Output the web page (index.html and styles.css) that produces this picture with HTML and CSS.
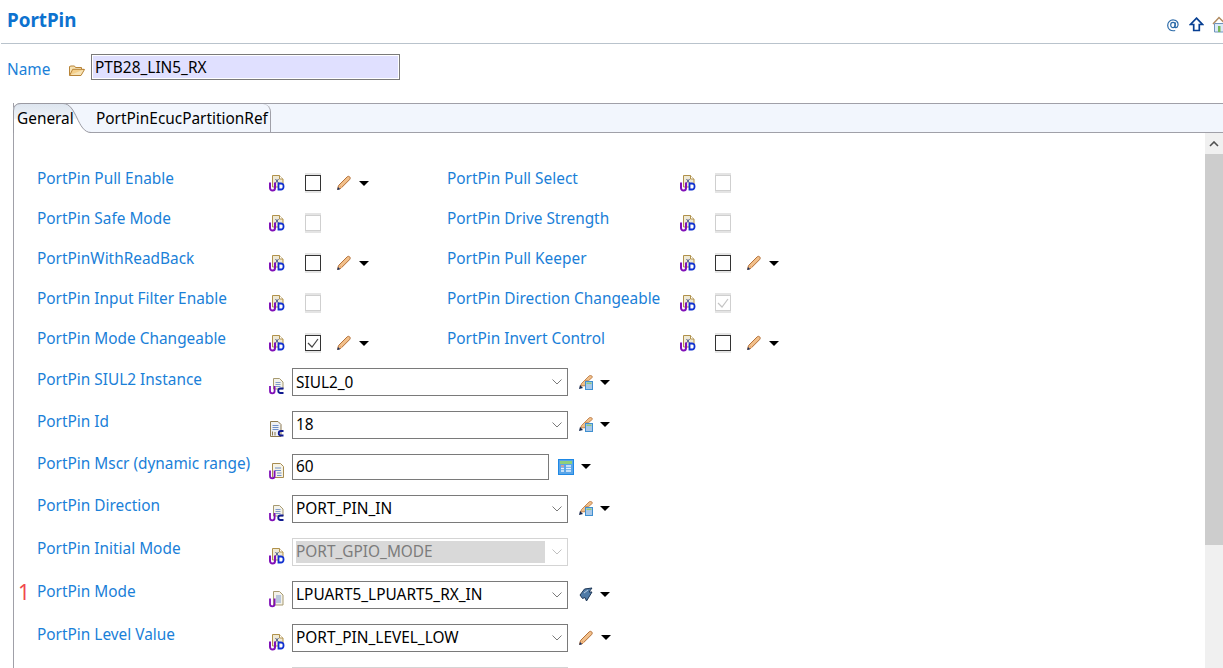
FILE: index.html
```html
<!DOCTYPE html>
<html lang="en">
<head>
<meta charset="utf-8">
<title>PortPin</title>
<link rel="stylesheet" href="styles.css">
</head>
<body>
<svg class="defs" width="0" height="0" aria-hidden="true">
  <defs>
    <symbol id="i-ud" viewBox="0 0 18 18">
      <path d="M4.500 1.500h7l3.500 3.500v8h-10.500z" fill="#efe9d4" stroke="#b0914a"/>
      <path d="M11.500 1.500v3.500h3.500" fill="#fff" stroke="#b0914a"/>
      <path d="M7.500 5l3 4M10.500 5l-3 4" stroke="#4f5f8a" fill="none"/>
      <path d="M2 8.500v5.500a2.500 2.500 0 0 0 5 0v-5.500" fill="none" stroke="#8010b8" stroke-width="2"/>
      <path d="M10.500 9.500h2.500a2.500 2.500 0 0 1 2.500 2.500v1a2.500 2.500 0 0 1-2.500 2.500h-2.500z" fill="#fff" stroke="#1030d0" stroke-width="1.800"/>
    </symbol>
    <symbol id="i-uc" viewBox="0 0 18 18">
      <path d="M5.500 1.500h6l3.500 3.500v7h-9.500z" fill="#f3f2ea" stroke="#a79a70"/>
      <path d="M7.500 5.500h5M7.500 7.500h5M7.500 9.500h5" stroke="#7f9bcb"/>
      <path d="M2 9v5a2.300 2.300 0 0 0 4.600 0v-5" fill="none" stroke="#8010b8" stroke-width="1.800"/>
      <path d="M15.500 11.500h-3a2 2 0 0 0 0 4.500h3" fill="none" stroke="#101a90" stroke-width="1.800"/>
    </symbol>
    <symbol id="i-lc" viewBox="0 0 18 18">
      <path d="M2.500 1.500h7.500l3 3v12h-10.500z" fill="#eef0f4" stroke="#8d7a50"/>
      <path d="M4.500 5.500h6M4.500 7.500h6M4.500 9.500h6" stroke="#6f8fc8"/>
      <path d="M4.500 11.500v4M7 12v3.500" stroke="#8d7a50"/>
      <path d="M15.500 11h-2.500a2 2 0 0 0 0 4.500h2.500" fill="none" stroke="#101a90" stroke-width="1.800"/>
    </symbol>
    <symbol id="i-u123" viewBox="0 0 18 18">
      <path d="M4.500 1.500h8l3 3v11h-11z" fill="#f6f3e6" stroke="#a88c50"/>
      <path d="M7 6h6M7 8.500h6M9 11h4.500M9 13.500h4.500" stroke="#6f8fc8"/>
      <path d="M2 8.500v5.500a2.300 2.300 0 0 0 4.600 0v-5.500" fill="none" stroke="#8010b8" stroke-width="1.800"/>
    </symbol>
    <symbol id="i-ul" viewBox="0 0 18 18">
      <path d="M5.500 1.500h6l3.500 3.500v10h-9.500z" fill="#f4f2ea" stroke="#a79a70"/>
      <path d="M8 6h5M8 8h5M8 10h5M8 12h5" stroke="#7f9bcb"/>
      <path d="M2 8.500v5.500a2.300 2.300 0 0 0 4.600 0v-5.500" fill="none" stroke="#8010b8" stroke-width="1.800"/>
    </symbol>
    <symbol id="i-pen" viewBox="0 0 16 16">
      <path d="M1.500 14.500l1-4 8.500-8.500c1-1 2.200-.8 2.800 0s.6 1.800-.3 2.700l-8.500 8.500z" fill="#f1bf8a" stroke="#b4713a"/>
      <path d="M3.500 10.500l2.500 2.500" stroke="#e8a468"/>
      <path d="M1.200 15l.8-3 2.200 2.200z" fill="#1c3566"/>
    </symbol>
    <symbol id="i-pencalc" viewBox="0 0 14 15">
      <path d="M1.500 11l1-2.500 7.500-7.500c1-.8 2.400-.6 3 .2l.5 1-4 3.500h-3v5z" fill="#f1bf8a" stroke="#b4713a" stroke-width=".8"/>
      <path d="M0 14l1-4 3 3z" fill="#14264f"/>
      <rect x="6.500" y="6.500" width="7" height="8" fill="#a9c8e8" stroke="#3f8fd0"/>
      <path d="M7.500 8.300h5" stroke="#8fc97a" stroke-width="1.500"/>
    </symbol>
    <symbol id="i-down" viewBox="0 0 10 5">
      <path d="M0 0h10l-5 5z" fill="#000"/>
    </symbol>
    <symbol id="i-chev" viewBox="0 0 10 6">
      <path d="M.5 .5l4.500 4.500 4.500-4.500" fill="none" stroke="currentColor"/>
    </symbol>
  </defs>
</svg>

<header class="title-bar">
  <h1 class="title">PortPin</h1>
  <div class="title-tools">
    <svg class="tool" width="14" height="16" viewBox="0 0 14 16"><path d="M9.500 5.500l-.8 4c-.2 1.200 1.600 1.500 2.500.5 1.600-1.700 1.300-6.500-3.500-7-3.500-.3-6 2.300-6 5.500 0 3.500 3 6 7.500 5" fill="none" stroke="#2b6aa8" stroke-width="1.200"/><ellipse cx="7" cy="8" rx="2.300" ry="2.600" fill="none" stroke="#2b6aa8" stroke-width="1.200"/></svg>
    <svg class="tool" width="15" height="15" viewBox="0 0 15 15"><path d="M7.500 1.200l6 6.300h-3.200v6h-5.600v-6h-3.200z" fill="#fff" stroke="#073f92" stroke-width="1.700"/></svg>
    <svg class="tool tool-home" width="12" height="17" viewBox="0 0 12 17"><path d="M1 8l6-6.500 5 5" fill="none" stroke="#b08a60" stroke-width="1.500"/><path d="M2.500 7.500h9.500v8.500h-9.500z" fill="#dbe9f7" stroke="#6f93bd"/><path d="M6 10h2.500v6h-2.500z" fill="#76b85a"/></svg>
  </div>
</header>

<div class="name-row">
  <label class="name-label">Name</label>
  <svg class="folder" width="16" height="12" viewBox="0 0 16 12"><path d="M.5 2.500v9h11.500l3.500-6h-3v-2h-6l-1-1.500h-3.500z" fill="#f7e3b5" stroke="#b88438"/><path d="M.7 11.300l3-6h11.500" fill="#f4cf8b" stroke="#b88438"/></svg>
  <div class="name-input">PTB28_LIN5_RX</div>
</div>

<section class="folder-pane">
  <div class="tab-strip">
    <div class="tab tab-active">
      <svg class="tab-shape" width="78" height="30" viewBox="0 0 78 30" preserveAspectRatio="none">
        <defs><linearGradient id="tabfill" x1="0" y1="0" x2="0" y2="1"><stop offset="0" stop-color="#dde5ef"/><stop offset=".5" stop-color="#eef2f7"/><stop offset=".55" stop-color="#fff"/></linearGradient></defs>
        <path d="M0 30V8Q0 .5 8 .5H50C64 .5 64 29.500 78 29.500V30Z" fill="url(#tabfill)"/>
        <path d="M.5 30V8Q.5 .5 8 .5H50C64 .5 64 29.500 78 29.500" fill="none" stroke="#9a9aa2"/>
      </svg>
      <span class="tab-text">General</span>
    </div>
    <div class="tab tab-other">PortPinEcucPartitionRef</div>
  </div>

  <div class="pane-body">
    <div class="form">
      <div class="check-grid">
        <span class="lbl">PortPin Pull Enable</span>
        <svg class="ico"><use href="#i-ud"/></svg>
        <div class="ctl"><span class="cb"></span><svg class="pen"><use href="#i-pen"/></svg><svg class="down"><use href="#i-down"/></svg></div>
        <span class="lbl">PortPin Pull Select</span>
        <svg class="ico"><use href="#i-ud"/></svg>
        <div class="ctl"><span class="cb cb-off"></span></div>

        <span class="lbl">PortPin Safe Mode</span>
        <svg class="ico"><use href="#i-ud"/></svg>
        <div class="ctl"><span class="cb cb-off"></span></div>
        <span class="lbl">PortPin Drive Strength</span>
        <svg class="ico"><use href="#i-ud"/></svg>
        <div class="ctl"><span class="cb cb-off"></span></div>

        <span class="lbl">PortPinWithReadBack</span>
        <svg class="ico"><use href="#i-ud"/></svg>
        <div class="ctl"><span class="cb"></span><svg class="pen"><use href="#i-pen"/></svg><svg class="down"><use href="#i-down"/></svg></div>
        <span class="lbl">PortPin Pull Keeper</span>
        <svg class="ico"><use href="#i-ud"/></svg>
        <div class="ctl"><span class="cb"></span><svg class="pen"><use href="#i-pen"/></svg><svg class="down"><use href="#i-down"/></svg></div>

        <span class="lbl">PortPin Input Filter Enable</span>
        <svg class="ico"><use href="#i-ud"/></svg>
        <div class="ctl"><span class="cb cb-off"></span></div>
        <span class="lbl">PortPin Direction Changeable</span>
        <svg class="ico"><use href="#i-ud"/></svg>
        <div class="ctl"><span class="cb cb-off"><svg class="tick" viewBox="0 0 12 10"><path d="M1 5l4 4 6-8" fill="none" stroke="#c4c4c4" stroke-width="1.200"/></svg></span></div>

        <span class="lbl">PortPin Mode Changeable</span>
        <svg class="ico"><use href="#i-ud"/></svg>
        <div class="ctl"><span class="cb"><svg class="tick" viewBox="0 0 12 10"><path d="M1 5l4 4 6-8" fill="none" stroke="#444" stroke-width="1.200"/></svg></span><svg class="pen"><use href="#i-pen"/></svg><svg class="down"><use href="#i-down"/></svg></div>
        <span class="lbl">PortPin Invert Control</span>
        <svg class="ico"><use href="#i-ud"/></svg>
        <div class="ctl"><span class="cb"></span><svg class="pen"><use href="#i-pen"/></svg><svg class="down"><use href="#i-down"/></svg></div>
      </div>

      <div class="field-list">
        <div class="field field-first">
          <span class="lbl">PortPin SIUL2 Instance</span>
          <svg class="ico ico-low"><use href="#i-uc"/></svg>
          <div class="combo"><span class="combo-text">SIUL2_0</span><svg class="chev"><use href="#i-chev"/></svg></div>
          <svg class="pen-calc"><use href="#i-pencalc"/></svg><svg class="down"><use href="#i-down"/></svg>
        </div>
        <div class="field">
          <span class="lbl">PortPin Id</span>
          <svg class="ico ico-low"><use href="#i-lc"/></svg>
          <div class="combo"><span class="combo-text">18</span><svg class="chev"><use href="#i-chev"/></svg></div>
          <svg class="pen-calc"><use href="#i-pencalc"/></svg><svg class="down"><use href="#i-down"/></svg>
        </div>
        <div class="field field-short">
          <span class="lbl">PortPin Mscr (dynamic range)</span>
          <svg class="ico ico-low"><use href="#i-u123"/></svg>
          <div class="textbox">60</div>
          <svg class="calc" width="16" height="16" viewBox="0 0 16 16"><rect x=".5" y=".5" width="15" height="15" fill="#5aa5e8" stroke="#1e88e5"/><rect x="2" y="2" width="12" height="3" fill="#8fd07a"/><path d="M3 7h3M8 7h5M3 9.500h3M8 9.500h5M3 12h3M8 12h5" stroke="#e8f2fb" stroke-width="1.300"/><path d="M3 7h3" stroke="#d8604a"/></svg>
          <svg class="down"><use href="#i-down"/></svg>
        </div>
        <div class="field">
          <span class="lbl">PortPin Direction</span>
          <svg class="ico ico-low"><use href="#i-uc"/></svg>
          <div class="combo"><span class="combo-text">PORT_PIN_IN</span><svg class="chev"><use href="#i-chev"/></svg></div>
          <svg class="pen-calc"><use href="#i-pencalc"/></svg><svg class="down"><use href="#i-down"/></svg>
        </div>
        <div class="field">
          <span class="lbl">PortPin Initial Mode</span>
          <svg class="ico ico-low"><use href="#i-ud"/></svg>
          <div class="combo combo-off"><span class="combo-text">PORT_GPIO_MODE</span><svg class="chev"><use href="#i-chev"/></svg></div>
        </div>
        <div class="field">
          <span class="lbl">PortPin Mode</span>
          <span class="marker">1</span>
          <svg class="ico ico-low"><use href="#i-ul"/></svg>
          <div class="combo"><span class="combo-text">LPUART5_LPUART5_RX_IN</span><svg class="chev"><use href="#i-chev"/></svg></div>
          <svg class="wave" width="14" height="15" viewBox="0 0 14 15"><path d="M1 8l4.500-6 7.500-1-3 4h3l-5.500 9-1.500-3.500-2.500 1z" fill="#4f7aa6" stroke="#1e3756"/><path d="M5 6l4-3" stroke="#b8cbdf"/></svg>
          <svg class="down"><use href="#i-down"/></svg>
        </div>
        <div class="field">
          <span class="lbl">PortPin Level Value</span>
          <svg class="ico ico-low"><use href="#i-ud"/></svg>
          <div class="combo"><span class="combo-text">PORT_PIN_LEVEL_LOW</span><svg class="chev"><use href="#i-chev"/></svg></div>
          <svg class="pen pen-field"><use href="#i-pen"/></svg><svg class="down"><use href="#i-down"/></svg>
        </div>
        <div class="field">
          <span class="lbl"></span>
          <span class="ico"></span>
          <div class="combo combo-off"></div>
        </div>
      </div>
    </div>
    <div class="scrollbar">
      <div class="scroll-up"><svg width="10" height="6" viewBox="0 0 10 6"><path d="M1 5l4-4 4 4" fill="none" stroke="#505050" stroke-width="1.600"/></svg></div>
      <div class="scroll-thumb"></div>
    </div>
  </div>
</section>
</body>
</html>
```
FILE: styles.css
```css
* { box-sizing: border-box; }
html, body { margin: 0; height: 668px; overflow: hidden; background: #fff; }
body { font-family: "Noto Sans", "Open Sans", sans-serif; font-size: 15.4px; color: #000; }
.defs { position: absolute; }

.title-bar { height: 44px; margin-left: 1px; border-bottom: 1px solid #b9c3cc; display: flex; justify-content: space-between; padding-left: 6px; }
.title { margin: 8px 0 0; font-size: 18.8px; line-height: 24px; font-weight: 700; color: #0d72cf; }
.title-tools { display: flex; align-items: flex-start; padding-top: 17px; gap: 9px; width: 57px; overflow: hidden; }
.tool { flex: none; }
.tool-home { margin-top: -1px; margin-left: -1px; }

.name-row { display: flex; align-items: center; height: 26px; margin-top: 10px; padding-left: 7px; }
.name-label { width: 62px; color: #1a80d8; margin-top: 4px; }
.folder { margin: 5px 6px 0 0; }
.name-input { width: 309px; height: 26px; border: 1px solid #7a7a7a; outline: 1px solid #fff; outline-offset: -2px; background: #e0e0ff; padding-left: 3px; line-height: 26px; }

.folder-pane { margin: 23px 0 0 13px; height: 565px; border-left: 1px solid #a0a0a8; display: flex; flex-direction: column; }
.tab-strip { height: 30px; display: flex; background: #f2f6fd; border-top: 1px solid #a0a0a8; border-bottom: 1px solid #a0a0a8; border-top-left-radius: 8px; margin-left: -1px; }
.tab { height: 29px; line-height: 30px; position: relative; white-space: nowrap; }
.tab-active { width: 78px; padding-left: 4px; margin-bottom: -1px; height: 30px; margin-top: -1px; line-height: 31px; }
.tab-shape { position: absolute; left: 0; top: 0; }
.tab-text { position: relative; }
.tab-other { width: 180px; padding-left: 5px; border-right: 1px solid #a0a0a8; border-top-right-radius: 8px; }

.pane-body { flex: 1; display: flex; min-height: 0; }
.form { flex: 1; min-width: 0; padding: 30px 0 0 23px; overflow: hidden; }
.lbl { color: #1a80d8; white-space: nowrap; display: block; padding-bottom: 10px; }

.check-grid { display: grid; grid-template-columns: 231px 37px 142px 232px 36px 1fr; grid-auto-rows: 40px; align-items: center; }
.ctl { display: flex; align-items: center; }
.ico { width: 18px; height: 18px; display: block; }
.cb { width: 16px; height: 16px; border: 1.500px solid #333; background: #fff; display: flex; align-items: center; justify-content: center; box-shadow: 0 -2px 0 #e4e4e4, 0 2px 0 #e4e4e4; }
.cb-off { border-color: #cfcfcf; }
.tick { width: 12px; height: 10px; }
.pen { width: 16px; height: 16px; margin-left: 15px; }
.down { width: 10px; height: 5px; margin-left: 7px; flex: none; }

.field-list { display: flex; flex-direction: column; margin-top: -2px; }
.field { height: 43px; display: flex; align-items: center; position: relative; flex: none; }
.field .lbl { width: 231px; flex: none; padding-bottom: 6px; }
.field-first { height: 42px; }
.field-short { height: 41px; }
.ico-low { margin-top: 8px; flex: none; }
.marker { position: absolute; left: -19px; top: 6px; color: #f0484e; font-size: 21px; line-height: 27px; }
.field > span.ico { flex: none; }
.combo { width: 276px; height: 28px; margin-left: 6px; border: 1px solid #7a7a7a; display: flex; align-items: center; justify-content: space-between; padding: 0 5px 0 3px; flex: none; color: #7a7a7a; }
.combo-text { color: #000; }
.chev { width: 10px; height: 6px; flex: none; }
.combo-off { border-color: #d4d4d4; color: #c0c0c0; }
.combo-off .combo-text { color: #7c7c7c; background: #d9d9d9; width: 249px; height: 22px; line-height: 21px; flex: none; }
.textbox { width: 257px; height: 26px; margin-left: 6px; border: 1px solid #7a7a7a; padding-left: 3px; line-height: 24px; flex: none; }
.pen-calc { width: 14px; height: 15px; margin-left: 11px; flex: none; }
.pen-field { margin-left: 10px; flex: none; }
.calc { margin-left: 9px; flex: none; }
.wave { margin-left: 11px; flex: none; }

.scrollbar { width: 18px; flex: none; background: #f0f0f0; display: flex; flex-direction: column; }
.scroll-up { height: 21px; display: flex; align-items: center; justify-content: center; }
.scroll-thumb { height: 391px; background: #cdcdcd; }
```
